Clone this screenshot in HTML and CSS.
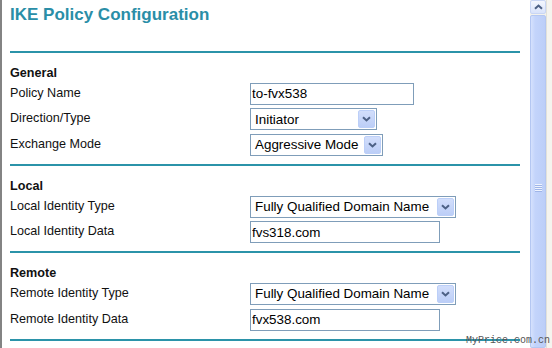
FILE: index.html
```html
<!DOCTYPE html>
<html>
<head>
<meta charset="utf-8">
<link rel="stylesheet" href="styles.css">
</head>
<body>
<div class="window">
  <main class="page">
    <h1 class="title">IKE Policy Configuration</h1>
    <hr class="rule rule-first">
    <section class="group">
      <h2 class="group-title">General</h2>
      <div class="row">
        <span class="label">Policy Name</span>
        <input class="input w-policy" type="text" value="to-fvx538">
      </div>
      <div class="row">
        <span class="label">Direction/Type</span>
        <div class="select w-direction"><span>Initiator</span><span class="arrow"><svg width="9" height="6" viewBox="0 0 9 6"><path d="M1 1.2 L4.5 4.5 L8 1.2" fill="none" stroke="#4d6185" stroke-width="2"/></svg></span></div>
      </div>
      <div class="row">
        <span class="label">Exchange Mode</span>
        <div class="select w-mode"><span>Aggressive Mode</span><span class="arrow"><svg width="9" height="6" viewBox="0 0 9 6"><path d="M1 1.2 L4.5 4.5 L8 1.2" fill="none" stroke="#4d6185" stroke-width="2"/></svg></span></div>
      </div>
    </section>
    <hr class="rule">
    <section class="group">
      <h2 class="group-title">Local</h2>
      <div class="row">
        <span class="label">Local Identity Type</span>
        <div class="select w-type"><span>Fully Qualified Domain Name</span><span class="arrow"><svg width="9" height="6" viewBox="0 0 9 6"><path d="M1 1.2 L4.5 4.5 L8 1.2" fill="none" stroke="#4d6185" stroke-width="2"/></svg></span></div>
      </div>
      <div class="row">
        <span class="label">Local Identity Data</span>
        <input class="input w-data" type="text" value="fvs318.com">
      </div>
    </section>
    <hr class="rule">
    <section class="group">
      <h2 class="group-title">Remote</h2>
      <div class="row">
        <span class="label">Remote Identity Type</span>
        <div class="select w-type"><span>Fully Qualified Domain Name</span><span class="arrow"><svg width="9" height="6" viewBox="0 0 9 6"><path d="M1 1.2 L4.5 4.5 L8 1.2" fill="none" stroke="#4d6185" stroke-width="2"/></svg></span></div>
      </div>
      <div class="row">
        <span class="label">Remote Identity Data</span>
        <input class="input w-data" type="text" value="fvx538.com">
      </div>
    </section>
    <hr class="rule">
  </main>
  <div class="scrollbar">
    <div class="sb-up"><svg width="9" height="6" viewBox="0 0 9 6"><path d="M1 4.8 L4.5 1.5 L8 4.8" fill="none" stroke="#4d6185" stroke-width="2"/></svg></div>
    <div class="sb-thumb"><div class="grip"><i></i><i></i><i></i><i></i></div></div>
  </div>
  <div class="sb-edge"></div>
  <div class="watermark">MyPrice.com.cn</div>
</div>
</body>
</html>
```

FILE: styles.css
```css
* { box-sizing: border-box; }
html, body { margin: 0; padding: 0; background: #fff; }
body { font-family: "Liberation Sans", Arial, sans-serif; color: #000; }

.window {
  position: relative;
  display: flex;
  width: 552px;
  height: 348px;
  overflow: hidden;
}

.page {
  flex: 1;
  border-left: 2px solid #838383;
  padding: 5px 10px 0 8px;
}

.title {
  margin: 0;
  font: bold 17px/20px "Liberation Sans", Arial, sans-serif;
  color: #2a8ea7;
}

.rule {
  margin: 0;
  height: 2px;
  border: 0;
  background: #2b93a9;
}
.rule-first { margin-top: 26px; }

.group { padding: 11.5px 0 8.2px; }

.group-title {
  margin: 0 0 2px;
  font: bold 12.6px/16px "Liberation Sans", Arial, sans-serif;
  color: #111;
}

.row {
  display: flex;
  align-items: flex-start;
  height: 22px;
}
.row + .row { margin-top: 3.7px; }

.label {
  width: 240px;
  padding-top: 3px;
  font-size: 12.6px;
  line-height: 15px;
  color: #111;
}

.input {
  height: 22px;
  margin: 0;
  border: 1px solid #7f9db9;
  padding: 0 1px;
  font: 13.4px "Liberation Sans", Arial, sans-serif;
  color: #000;
  background: #fff;
  outline: none;
}
.w-policy { width: 164px; }
.w-data { width: 190px; }

.select {
  display: flex;
  align-items: center;
  justify-content: space-between;
  height: 22px;
  border: 1px solid #7f9db9;
  padding: 0 1px 0 4px;
  font-size: 13.4px;
  background: #fff;
}
.w-direction { width: 127px; }
.w-mode { width: 133px; }
.w-type { width: 206px; }

.arrow {
  display: flex;
  align-items: center;
  justify-content: center;
  width: 17px;
  height: 18px;
  border: 1px solid #bccff8;
  border-radius: 2px;
  background: linear-gradient(#d2defb, #bccef7);
}

.scrollbar {
  width: 16px;
  display: flex;
  flex-direction: column;
  background: #f3f2ec;
}
.sb-up {
  height: 14px;
  display: flex;
  align-items: center;
  justify-content: center;
  border: 1px solid #c9d6f4;
  border-radius: 2px;
  background: linear-gradient(#f4f7fe, #d9e3fb);
}
.sb-thumb {
  flex: 1;
  margin-top: 1px;
  border: 1px solid #b4c7f2;
  border-radius: 2px;
  background: linear-gradient(90deg, #d5e1fd, #c3d4fb 30%, #bccef8);
  padding-top: 168px;
}
.grip {
  display: flex;
  flex-direction: column;
  align-items: center;
  gap: 1px;
}
.grip i {
  display: block;
  width: 7px;
  height: 1px;
  background: #eef3fe;
  box-shadow: 0 1px 0 #9fb5e8;
}

.sb-edge {
  width: 6px;
  background: #f5f4ef;
  border-left: 1px solid #e2e1da;
}

.watermark {
  position: absolute;
  right: 2px;
  bottom: 1px;
  font: 10px/12px "Liberation Mono", "Courier New", monospace;
  color: #555;
}
```
